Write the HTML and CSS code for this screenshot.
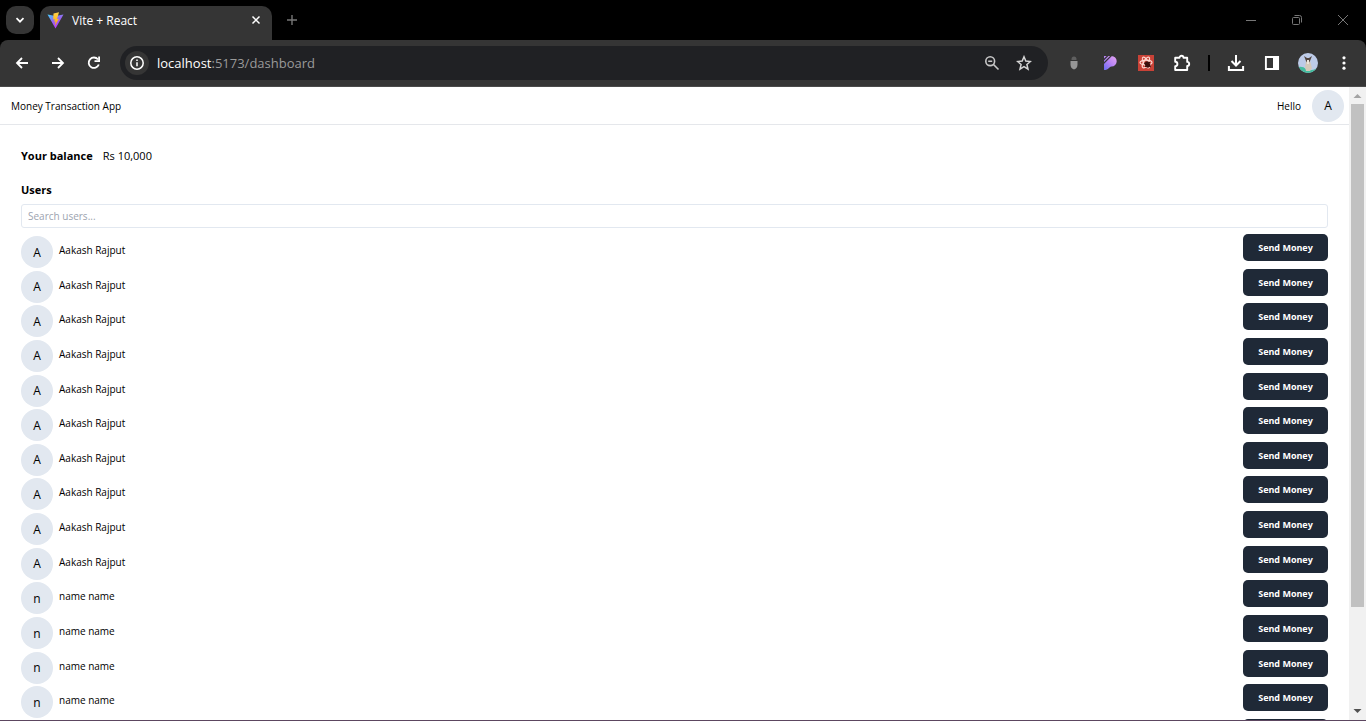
FILE: index.html
```html
<!DOCTYPE html>
<html lang="en">
<head>
    <meta charset="UTF-8">
    <meta name="viewport" content="width=device-width, initial-scale=1.0">
    <title>Vite + React</title>
    <link rel="stylesheet" href="styles.css">
</head>
<body>

    <div class="tabbar">
        <button class="tab-search" aria-label="Search tabs">
            <svg width="10" height="10" viewBox="0 0 10 10"><path d="M1.5 3.2 5 6.7l3.500-3.500" fill="none" stroke="#fff" stroke-width="1.700"/></svg>
        </button>
        <div class="tab">
            <svg width="17" height="17" viewBox="0 0 17 17">
                <defs>
                    <linearGradient id="vite" x1="0" y1="0" x2="0.6" y2="1"><stop offset="0" stop-color="#41d1ff"/><stop offset="0.5" stop-color="#9468ee"/><stop offset="1" stop-color="#bd34fe"/></linearGradient>
                    <linearGradient id="bolt" x1="0" y1="0" x2="0" y2="1"><stop offset="0" stop-color="#ffd24a"/><stop offset="1" stop-color="#ffa800"/></linearGradient>
                </defs>
                <path d="M.5 2.500 8.500 16.500 16.500 2.500 8.500 4z" fill="url(#vite)"/>
                <path d="M12 .3 6.500 1.400 6.200 7.600l1.700-.3-.6 2.500 1.300-.4-.7 4.600 3.900-7.300-1.800.3z" fill="url(#bolt)"/>
            </svg>
            <span class="tab-title">Vite + React</span>
            <button class="plain" aria-label="Close tab">
                <svg width="10" height="10" viewBox="0 0 10 10"><path d="m1.500 1.500 7 7m0-7-7 7" stroke="#fff" stroke-width="1.500"/></svg>
            </button>
        </div>
        <button class="plain new-tab" aria-label="New tab">
            <svg width="12" height="12" viewBox="0 0 12 12"><path d="M6 1v10M1 6h10" stroke="#777" stroke-width="1.400"/></svg>
        </button>
        <div class="window-buttons">
            <button class="plain" aria-label="Minimize"><svg width="12" height="12" viewBox="0 0 12 12"><path d="M1 6.500h10" stroke="#777"/></svg></button>
            <button class="plain" aria-label="Restore"><svg width="12" height="12" viewBox="0 0 12 12" fill="none" stroke="#777"><rect x="1.500" y="3.500" width="7" height="7" rx="1"/><path d="M3.500 1.500h5a2 2 0 0 1 2 2v5"/></svg></button>
            <button class="plain" aria-label="Close"><svg width="12" height="12" viewBox="0 0 12 12"><path d="m1 1 10 10m0-10L1 11" stroke="#777"/></svg></button>
        </div>
    </div>

    <div class="toolbar">
        <button class="plain" aria-label="Back"><svg width="16" height="16" viewBox="0 0 16 16"><path d="M14 8H3m5-5L3 8l5 5" fill="none" stroke="#fff" stroke-width="1.800"/></svg></button>
        <button class="plain" aria-label="Forward"><svg width="16" height="16" viewBox="0 0 16 16"><path d="M2 8h11M8 3l5 5-5 5" fill="none" stroke="#fff" stroke-width="1.800"/></svg></button>
        <button class="plain" aria-label="Reload"><svg width="16" height="16" viewBox="0 0 16 16"><path d="M12.800 9.500A5.200 5.200 0 1 1 12 4.500" fill="none" stroke="#fff" stroke-width="1.800"/><path d="M14 1.500v5.500H8.500V5.300h3.700V1.500z" fill="#fff"/></svg></button>
        <div class="address">
            <button class="site-info" aria-label="Site information"><svg width="14" height="14" viewBox="0 0 14 14"><circle cx="7" cy="7" r="6.200" fill="none" stroke="#fff" stroke-width="1.500"/><path d="M7 6.200v4M7 3.500v1.500" stroke="#fff" stroke-width="1.500"/></svg></button>
            <p class="url"><span>localhost</span>:5173/dashboard</p>
            <button class="plain" aria-label="Zoom"><svg width="16" height="16" viewBox="0 0 16 16"><g fill="none" stroke="#c7c7c7" stroke-width="1.600"><circle cx="6.200" cy="6.200" r="4.400"/><path d="m9.500 9.500 5 5M4.200 6.200h4"/></g></svg></button>
            <button class="plain" aria-label="Bookmark"><svg width="16" height="16" viewBox="0 0 16 16"><path d="m8 1.800 1.800 4.300 4.600.4-3.500 3 1.100 4.600L8 11.700l-4 2.400 1.100-4.600-3.500-3 4.600-.4z" fill="none" stroke="#d5d5d5" stroke-width="1.500"/></svg></button>
        </div>
        <div class="extensions">
            <button class="plain" aria-label="Extension"><svg width="16" height="16" viewBox="0 0 16 16"><path d="M5.500 4Q5.500 1.500 8 1.500T10.500 4v1h-5z" fill="#5f5f5f"/><path d="M4.500 6h7v3.500q0 4-3.500 5-3.500-1-3.500-5z" fill="#969696"/></svg></button>
            <button class="plain" aria-label="Extension"><svg width="16" height="16" viewBox="0 0 16 16"><defs><linearGradient id="pp" x1="1" y1="0" x2="0" y2="1"><stop offset="0" stop-color="#e6a5f0"/><stop offset="0.5" stop-color="#b884f5"/><stop offset="1" stop-color="#666bf2"/></linearGradient></defs><path d="M2 1h7.500a5.200 5.200 0 0 1 0 10.400C7 11.400 7 15 2 15z" fill="url(#pp)"/><path d="m1 5.500 5-5M1 9l8.500-8.500" stroke="#353535" stroke-width="1.200"/></svg></button>
            <button class="plain" aria-label="Extension"><svg width="16" height="16" viewBox="0 0 16 16"><path fill="#c94237" d="M0 0h16v16H0z"/><g fill="none" stroke="#ffd9d2" stroke-width="1.200"><ellipse cx="8" cy="7.500" rx="6" ry="2.300"/><ellipse cx="8" cy="7.500" rx="6" ry="2.300" transform="rotate(60 8 7.500)"/><ellipse cx="8" cy="7.500" rx="6" ry="2.300" transform="rotate(120 8 7.500)"/></g><ellipse cx="9.500" cy="9.500" rx="2.600" ry="3.200" fill="#3b0f0c" transform="rotate(-30 9.500 9.500)"/><path d="m6 8 7 4m-1-5-5 5" stroke="#3b0f0c"/></svg></button>
            <button class="plain" aria-label="Extensions"><svg width="18" height="18" viewBox="0 0 18 18"><path d="M2.200 3.800h4.300a2 2 0 0 1 4 0h3.700v4.100a2 2 0 0 1 0 4v4.100H2.200v-3.800a2.200 2.200 0 0 0 0-4.400z" fill="none" stroke="#fff" stroke-width="1.900" stroke-linejoin="round"/></svg></button>
        </div>
        <span class="divider"></span>
        <div class="browser-menu">
            <button class="plain" aria-label="Downloads"><svg width="18" height="18" viewBox="0 0 18 18"><path d="M9 1v10M4.500 7 9 11.500 13.500 7M1.900 12v4h14.200v-4" fill="none" stroke="#fff" stroke-width="2"/></svg></button>
            <button class="plain" aria-label="Side panel"><svg width="16" height="16" viewBox="0 0 16 16"><path d="M1.900 2h12.200v12H1.900z" fill="none" stroke="#fff" stroke-width="1.900"/><path d="M9 2h5v12H9z" fill="#fff"/></svg></button>
            <button class="plain" aria-label="Profile"><svg width="20" height="20" viewBox="0 0 20 20"><defs><clipPath id="round"><circle cx="10" cy="10" r="10"/></clipPath></defs><g clip-path="url(#round)"><path fill="#bdcbe8" d="M0 0h20v20H0z"/><path fill="#45bd9f" d="M0 14q5-1 8 2t12-1v5H0z"/><path fill="#d4c9ba" d="M8 8h4l2 7-2 3H8l-1-4z"/><path fill="#50443f" d="m6 3 3 2h2l3-2-2 5-2 3-2-3z"/><path fill="#ece5da" d="M9 7h2v4H9z"/></g></svg></button>
            <button class="plain" aria-label="Menu"><svg width="16" height="16" viewBox="0 0 16 16" fill="#fff"><circle cx="8" cy="2.800" r="1.600"/><circle cx="8" cy="8" r="1.600"/><circle cx="8" cy="13.200" r="1.600"/></svg></button>
        </div>
    </div>

    <div class="viewport">
        <div class="page">
            <header class="appbar">
                <div class="brand">Money Transaction App</div>
                <div class="hello">Hello</div>
                <div class="avatar">A</div>
            </header>

            <main class="dashboard">
                <div class="balance"><strong>Your balance</strong><span>Rs 10,000</span></div>
                <label class="users-label" for="search">Users</label>
                <input class="search" type="text" id="search" placeholder="Search users...">

                <ul class="users">
                    <li class="user"><div class="avatar">A</div><span class="name">Aakash Rajput</span><button class="send">Send Money</button></li>
                    <li class="user"><div class="avatar">A</div><span class="name">Aakash Rajput</span><button class="send">Send Money</button></li>
                    <li class="user"><div class="avatar">A</div><span class="name">Aakash Rajput</span><button class="send">Send Money</button></li>
                    <li class="user"><div class="avatar">A</div><span class="name">Aakash Rajput</span><button class="send">Send Money</button></li>
                    <li class="user"><div class="avatar">A</div><span class="name">Aakash Rajput</span><button class="send">Send Money</button></li>
                    <li class="user"><div class="avatar">A</div><span class="name">Aakash Rajput</span><button class="send">Send Money</button></li>
                    <li class="user"><div class="avatar">A</div><span class="name">Aakash Rajput</span><button class="send">Send Money</button></li>
                    <li class="user"><div class="avatar">A</div><span class="name">Aakash Rajput</span><button class="send">Send Money</button></li>
                    <li class="user"><div class="avatar">A</div><span class="name">Aakash Rajput</span><button class="send">Send Money</button></li>
                    <li class="user"><div class="avatar">A</div><span class="name">Aakash Rajput</span><button class="send">Send Money</button></li>
                    <li class="user"><div class="avatar">n</div><span class="name">name name</span><button class="send">Send Money</button></li>
                    <li class="user"><div class="avatar">n</div><span class="name">name name</span><button class="send">Send Money</button></li>
                    <li class="user"><div class="avatar">n</div><span class="name">name name</span><button class="send">Send Money</button></li>
                    <li class="user"><div class="avatar">n</div><span class="name">name name</span><button class="send">Send Money</button></li>
                    <li class="user"><button class="send" aria-label="Send Money"></button></li>
                </ul>
            </main>
        </div>

        <div class="scrollbar">
            <svg width="17" height="17" viewBox="0 0 17 17"><path d="M4.500 11h8L8.500 7z" fill="#a3a3a3"/></svg>
            <div class="track"><div class="thumb"></div></div>
            <svg width="17" height="17" viewBox="0 0 17 17"><path d="M4.500 6h8l-4 4z" fill="#505050"/></svg>
        </div>
    </div>

</body>
</html>
```
FILE: styles.css
```css
* {
    box-sizing: border-box;
}

body {
    display: flex;
    flex-direction: column;
    height: 100vh;
    margin: 0;
    overflow: hidden;
    background-color: #000;
    border-bottom: 1px solid #5c4660;
    font-family: "Open Sans", "Noto Sans", sans-serif;
    font-size: 10px;
    color: #000;
}

button {
    font-family: inherit;
    border: none;
    cursor: pointer;
}

svg {
    display: block;
    flex-shrink: 0;
}

.plain {
    display: flex;
    justify-content: center;
    padding: 0;
    background: none;
}

/* browser tabs */
.tabbar {
    display: flex;
    align-items: center;
    height: 40px;
    padding-left: 6px;
    flex-shrink: 0;
}

.tab-search {
    display: flex;
    align-items: center;
    justify-content: center;
    width: 28px;
    height: 28px;
    padding: 0;
    border-radius: 10px;
    background-color: #353535;
}

.tab {
    display: flex;
    align-items: center;
    align-self: flex-end;
    gap: 8px;
    width: 232px;
    height: 34px;
    margin-left: 6px;
    padding: 0 11px 6px 7px;
    border-radius: 10px 10px 0 0;
    background-color: #353535;
    color: #fff;
    font-size: 12px;
}

.tab-title {
    flex: 1;
}

.new-tab {
    margin-left: 14px;
}

.window-buttons {
    display: flex;
    gap: 34px;
    margin-left: auto;
    padding-right: 17px;
}

/* address bar */
.toolbar {
    display: flex;
    align-items: center;
    height: 47px;
    padding: 0 14px;
    flex-shrink: 0;
    gap: 20px;
    border-radius: 8px 8px 0 0;
    border-bottom: 1px solid #4a4a4a;
    background-color: #353535;
}

.address {
    display: flex;
    align-items: center;
    flex: 1;
    gap: 16px;
    height: 34px;
    margin-left: -2px;
    padding: 0 16px 0 5px;
    border-radius: 17px;
    background-color: #202124;
}

.site-info {
    display: flex;
    align-items: center;
    justify-content: center;
    width: 24px;
    height: 24px;
    padding: 0;
    border-radius: 12px;
    background-color: #353535;
}

.url {
    flex: 1;
    margin: 0 0 0 -8px;
    font-size: 13px;
    color: #9a9a9a;
}

.url span {
    color: #fff;
}

.extensions,
.browser-menu {
    display: flex;
    align-items: center;
    gap: 20px;
}

.extensions .plain,
.browser-menu .plain {
    width: 16px;
}

.extensions {
    margin-left: -2px;
}

.divider {
    width: 2px;
    height: 16px;
    margin: 0 -2px;
    background-color: #000;
}

/* page */
.viewport {
    display: flex;
    flex: 1;
    min-height: 0;
    background-color: #fff;
}

.page {
    display: flex;
    flex-direction: column;
    flex: 1;
    min-width: 0;
    overflow: hidden;
}

.appbar {
    display: flex;
    align-items: center;
    height: 38px;
    padding: 0 5px 0 11px;
    flex-shrink: 0;
    border-bottom: 1px solid #e5e7eb;
}

.brand {
    flex: 1;
}

.hello {
    margin-right: 11px;
}

.avatar {
    display: flex;
    align-items: center;
    justify-content: center;
    width: 32px;
    height: 32px;
    border-radius: 50%;
    background-color: #e2e8f0;
    font-size: 12px;
}

.dashboard {
    display: flex;
    flex-direction: column;
    flex: 1;
    min-height: 0;
    padding: 21px 21px 1px;
}

.balance {
    display: flex;
    gap: 10px;
    font-size: 11px;
    line-height: 20px;
}

.balance span {
    font-weight: 500;
}

.balance strong,
.users-label {
    font-weight: 700;
}

.users-label {
    margin-top: 14px;
    font-size: 11px;
    line-height: 20px;
}

.search {
    width: 100%;
    height: 24px;
    margin-top: 4px;
    padding: 0 6px;
    flex-shrink: 0;
    border: 1px solid #e2e8f0;
    border-radius: 3px;
    font-family: inherit;
    font-size: 10px;
}

.search::placeholder {
    color: #9ca3af;
}

/* fourteen rows fill the list, the next one runs off the bottom */
.users {
    display: grid;
    grid-template-rows: repeat(14, 1fr);
    grid-auto-rows: 0;
    flex: 1;
    min-height: 0;
    margin: 6px 0 0;
    padding: 0;
    list-style: none;
}

.user {
    display: flex;
    align-items: flex-start;
}

.user .avatar {
    margin-top: 2px;
}

.name {
    margin-left: 6px;
    line-height: 32px;
}

.send {
    width: 85px;
    height: 27px;
    margin-left: auto;
    padding: 0;
    border-radius: 5px;
    background-color: #1f2937;
    color: #fff;
    font-size: 9px;
    font-weight: 700;
}

.scrollbar {
    display: flex;
    flex-direction: column;
    width: 17px;
    background-color: #f1f1f1;
}

.track {
    flex: 1;
    padding: 0 2px;
}

.thumb {
    height: 84%;
    background-color: #c1c1c1;
}
```
